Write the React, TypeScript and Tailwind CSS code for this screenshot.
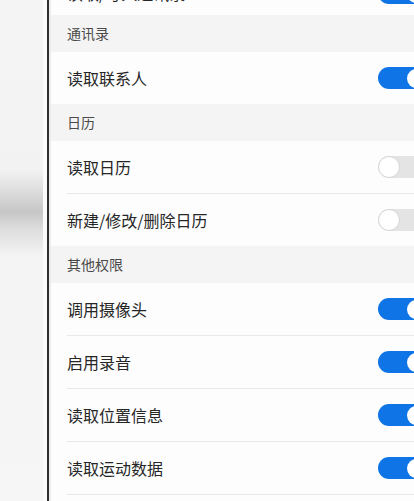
import React from 'react';

type Item = { label: string; on: boolean };
type Group = { title?: string; items: Item[] };

const groups: Group[] = [
  { items: [{ label: '读取/写入通讯录', on: true }] },
  { title: '通讯录', items: [{ label: '读取联系人', on: true }] },
  {
    title: '日历',
    items: [
      { label: '读取日历', on: false },
      { label: '新建/修改/删除日历', on: false },
    ],
  },
  {
    title: '其他权限',
    items: [
      { label: '调用摄像头', on: true },
      { label: '启用录音', on: true },
      { label: '读取位置信息', on: true },
      { label: '读取运动数据', on: true },
    ],
  },
];

function Toggle({ on }: { on: boolean }) {
  return on ? (
    <div className="flex h-[22px] w-[50px] shrink-0 items-center justify-end rounded-full bg-[#0f74e6] pr-[2px]">
      <div className="h-[19px] w-[19px] rounded-full bg-white" />
    </div>
  ) : (
    <div className="flex h-[22px] w-[50px] shrink-0 items-center rounded-full bg-[#e4e4e4]">
      <div className="h-[22px] w-[22px] rounded-full border border-[#d6d6d6] bg-white" />
    </div>
  );
}

export default function App() {
  return (
    <div
      className="flex h-[501px] w-[414px] overflow-hidden bg-[#f7f7f7]"
      style={{ fontFamily: '"Noto Sans CJK SC", "Noto Sans", sans-serif' }}
    >
      {/* blurred page behind */}
      <div className="flex w-[47px] shrink-0">
        <div className="w-[43px] bg-[linear-gradient(to_bottom,#f4f4f4_0,#f2f2f2_170px,#d9d9d9_195px,#c6c6c6_212px,#dcdcdc_228px,#f4f4f4_255px,#f6f6f6_100%)]" />
        <div className="w-[4px] bg-[#fbfbfb]" />
      </div>
      <div className="w-[2px] shrink-0 bg-[#2f2f2f]" />
      <div className="w-[2px] shrink-0 bg-[#ececec]" />

      {/* permission list, scrolled so the first row is mostly hidden */}
      <div className="-mt-[29px] flex min-w-0 flex-1 flex-col bg-[#fdfdfd]">
        {groups.map((g, gi) => (
          <div key={gi} className="flex flex-col">
            {g.title && (
              <div className="flex h-[37px] items-center bg-[#f4f4f4] pl-[16px] text-[14px] text-[#4a4a4a]">
                {g.title}
              </div>
            )}
            {g.items.map((it, ii) => (
              <div key={ii} className="flex flex-col pl-[16px]">
                {ii > 0 && <div className="h-px bg-[#e9e9e9]" />}
                <div
                  className={
                    gi === 0
                      ? 'flex h-[44px] items-center justify-between'
                      : 'flex h-[52px] items-center justify-between'
                  }
                >
                  <span className="text-[16px] text-[#262626]">{it.label}</span>
                  <div className="-mr-[14px]">
                    <Toggle on={it.on} />
                  </div>
                </div>
                {gi === groups.length - 1 && ii === g.items.length - 1 && (
                  <div className="h-px bg-[#e9e9e9]" />
                )}
              </div>
            ))}
          </div>
        ))}
      </div>
    </div>
  );
}
